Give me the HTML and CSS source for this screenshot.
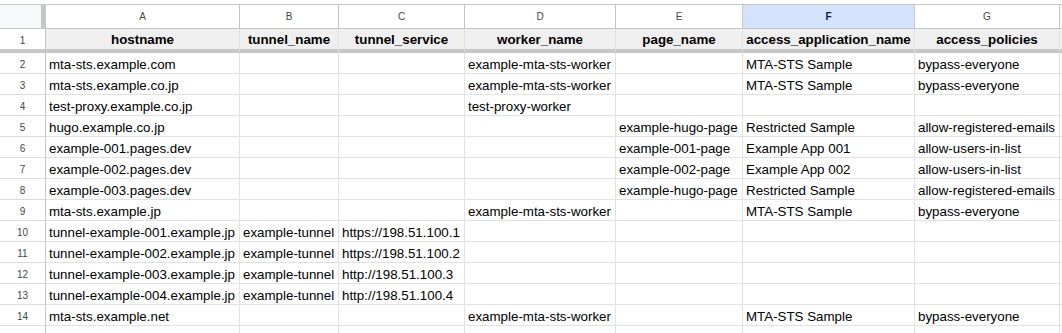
FILE: index.html
```html
<!DOCTYPE html>
<html>
<head>
    <title>Hostnames sheet</title>
    <meta charset="utf-8">
    <link rel="stylesheet" href="styles.css">
</head>
<body>
    <div class="sheet">
        <!-- column letters -->
        <div class="corner"></div>
        <div class="col-head">A</div>
        <div class="col-head">B</div>
        <div class="col-head">C</div>
        <div class="col-head">D</div>
        <div class="col-head">E</div>
        <div class="col-head selected">F</div>
        <div class="col-head">G</div>
        <div class="col-head"></div>

        <!-- row 1: field names -->
        <div class="row-head frozen">1</div>
        <div class="cell title">hostname</div>
        <div class="cell title">tunnel_name</div>
        <div class="cell title">tunnel_service</div>
        <div class="cell title">worker_name</div>
        <div class="cell title">page_name</div>
        <div class="cell title">access_application_name</div>
        <div class="cell title">access_policies</div>
        <div class="cell title"></div>

        <div class="row-head">2</div>
        <div class="cell">mta-sts.example.com</div>
        <div class="cell"></div>
        <div class="cell"></div>
        <div class="cell">example-mta-sts-worker</div>
        <div class="cell"></div>
        <div class="cell">MTA-STS Sample</div>
        <div class="cell">bypass-everyone</div>
        <div class="cell"></div>

        <div class="row-head">3</div>
        <div class="cell">mta-sts.example.co.jp</div>
        <div class="cell"></div>
        <div class="cell"></div>
        <div class="cell">example-mta-sts-worker</div>
        <div class="cell"></div>
        <div class="cell">MTA-STS Sample</div>
        <div class="cell">bypass-everyone</div>
        <div class="cell"></div>

        <div class="row-head">4</div>
        <div class="cell">test-proxy.example.co.jp</div>
        <div class="cell"></div>
        <div class="cell"></div>
        <div class="cell">test-proxy-worker</div>
        <div class="cell"></div>
        <div class="cell"></div>
        <div class="cell"></div>
        <div class="cell"></div>

        <div class="row-head">5</div>
        <div class="cell">hugo.example.co.jp</div>
        <div class="cell"></div>
        <div class="cell"></div>
        <div class="cell"></div>
        <div class="cell">example-hugo-page</div>
        <div class="cell">Restricted Sample</div>
        <div class="cell">allow-registered-emails</div>
        <div class="cell"></div>

        <div class="row-head">6</div>
        <div class="cell">example-001.pages.dev</div>
        <div class="cell"></div>
        <div class="cell"></div>
        <div class="cell"></div>
        <div class="cell">example-001-page</div>
        <div class="cell">Example App 001</div>
        <div class="cell">allow-users-in-list</div>
        <div class="cell"></div>

        <div class="row-head">7</div>
        <div class="cell">example-002.pages.dev</div>
        <div class="cell"></div>
        <div class="cell"></div>
        <div class="cell"></div>
        <div class="cell">example-002-page</div>
        <div class="cell">Example App 002</div>
        <div class="cell">allow-users-in-list</div>
        <div class="cell"></div>

        <div class="row-head">8</div>
        <div class="cell">example-003.pages.dev</div>
        <div class="cell"></div>
        <div class="cell"></div>
        <div class="cell"></div>
        <div class="cell">example-hugo-page</div>
        <div class="cell">Restricted Sample</div>
        <div class="cell">allow-registered-emails</div>
        <div class="cell"></div>

        <div class="row-head">9</div>
        <div class="cell">mta-sts.example.jp</div>
        <div class="cell"></div>
        <div class="cell"></div>
        <div class="cell">example-mta-sts-worker</div>
        <div class="cell"></div>
        <div class="cell">MTA-STS Sample</div>
        <div class="cell">bypass-everyone</div>
        <div class="cell"></div>

        <div class="row-head">10</div>
        <div class="cell">tunnel-example-001.example.jp</div>
        <div class="cell">example-tunnel</div>
        <div class="cell">https://198.51.100.1</div>
        <div class="cell"></div>
        <div class="cell"></div>
        <div class="cell"></div>
        <div class="cell"></div>
        <div class="cell"></div>

        <div class="row-head">11</div>
        <div class="cell">tunnel-example-002.example.jp</div>
        <div class="cell">example-tunnel</div>
        <div class="cell">https://198.51.100.2</div>
        <div class="cell"></div>
        <div class="cell"></div>
        <div class="cell"></div>
        <div class="cell"></div>
        <div class="cell"></div>

        <div class="row-head">12</div>
        <div class="cell">tunnel-example-003.example.jp</div>
        <div class="cell">example-tunnel</div>
        <div class="cell">http://198.51.100.3</div>
        <div class="cell"></div>
        <div class="cell"></div>
        <div class="cell"></div>
        <div class="cell"></div>
        <div class="cell"></div>

        <div class="row-head">13</div>
        <div class="cell">tunnel-example-004.example.jp</div>
        <div class="cell">example-tunnel</div>
        <div class="cell">http://198.51.100.4</div>
        <div class="cell"></div>
        <div class="cell"></div>
        <div class="cell"></div>
        <div class="cell"></div>
        <div class="cell"></div>

        <div class="row-head">14</div>
        <div class="cell">mta-sts.example.net</div>
        <div class="cell"></div>
        <div class="cell"></div>
        <div class="cell">example-mta-sts-worker</div>
        <div class="cell"></div>
        <div class="cell">MTA-STS Sample</div>
        <div class="cell">bypass-everyone</div>
        <div class="cell"></div>

        <div class="row-head">15</div>
        <div class="cell"></div>
        <div class="cell"></div>
        <div class="cell"></div>
        <div class="cell"></div>
        <div class="cell"></div>
        <div class="cell"></div>
        <div class="cell"></div>
        <div class="cell"></div>
    </div>
</body>
</html>
```

FILE: styles.css
```css
body {
    font-family: "Liberation Sans", Arial, sans-serif;
    background-color: white;
    margin: 0;
    padding: 4px 0 0 0;
    overflow: hidden;
}

.sheet {
    display: grid;
    grid-template-columns: 46px 194px 99px 126px 151px 127px 172px 145px 120px;
    grid-template-rows: 24px 24px;
    grid-auto-rows: 21px;
    border-top: 1px solid #c4c7c5;
    width: max-content;
}

.sheet > div {
    box-sizing: border-box;
    white-space: nowrap;
    overflow: hidden;
}

.corner {
    background-color: #f8f9fa;
    border-right: 5px solid #c7c7c7;
    border-bottom: 1px solid #c4c7c5;
}

.col-head {
    font-size: 10px;
    line-height: 23px;
    text-align: center;
    color: #444746;
    border-right: 1px solid #c4c7c5;
    border-bottom: 1px solid #c4c7c5;
}

.col-head.selected {
    background-color: #d3e3fd;
    color: #041e49;
    font-weight: bold;
}

.row-head {
    font-size: 10px;
    line-height: 21px;
    padding-top: 1px;
    text-align: center;
    color: #444746;
    border-right: 1px solid #c4c7c5;
    border-bottom: 1px solid #dadada;
}

.row-head.frozen {
    border-bottom: 4px solid #c7c7c7;
}

.cell {
    font-size: 13.33px;
    line-height: 20px;
    padding: 2px 3px 0 3px;
    color: black;
    border-right: 1px solid #e2e2e2;
    border-bottom: 1px solid #e2e2e2;
}

.cell.title {
    background-color: #efefef;
    font-weight: bold;
    text-align: center;
    padding: 1px 2px 0 2px;
    border-bottom: 4px solid #c7c7c7;
}
```
